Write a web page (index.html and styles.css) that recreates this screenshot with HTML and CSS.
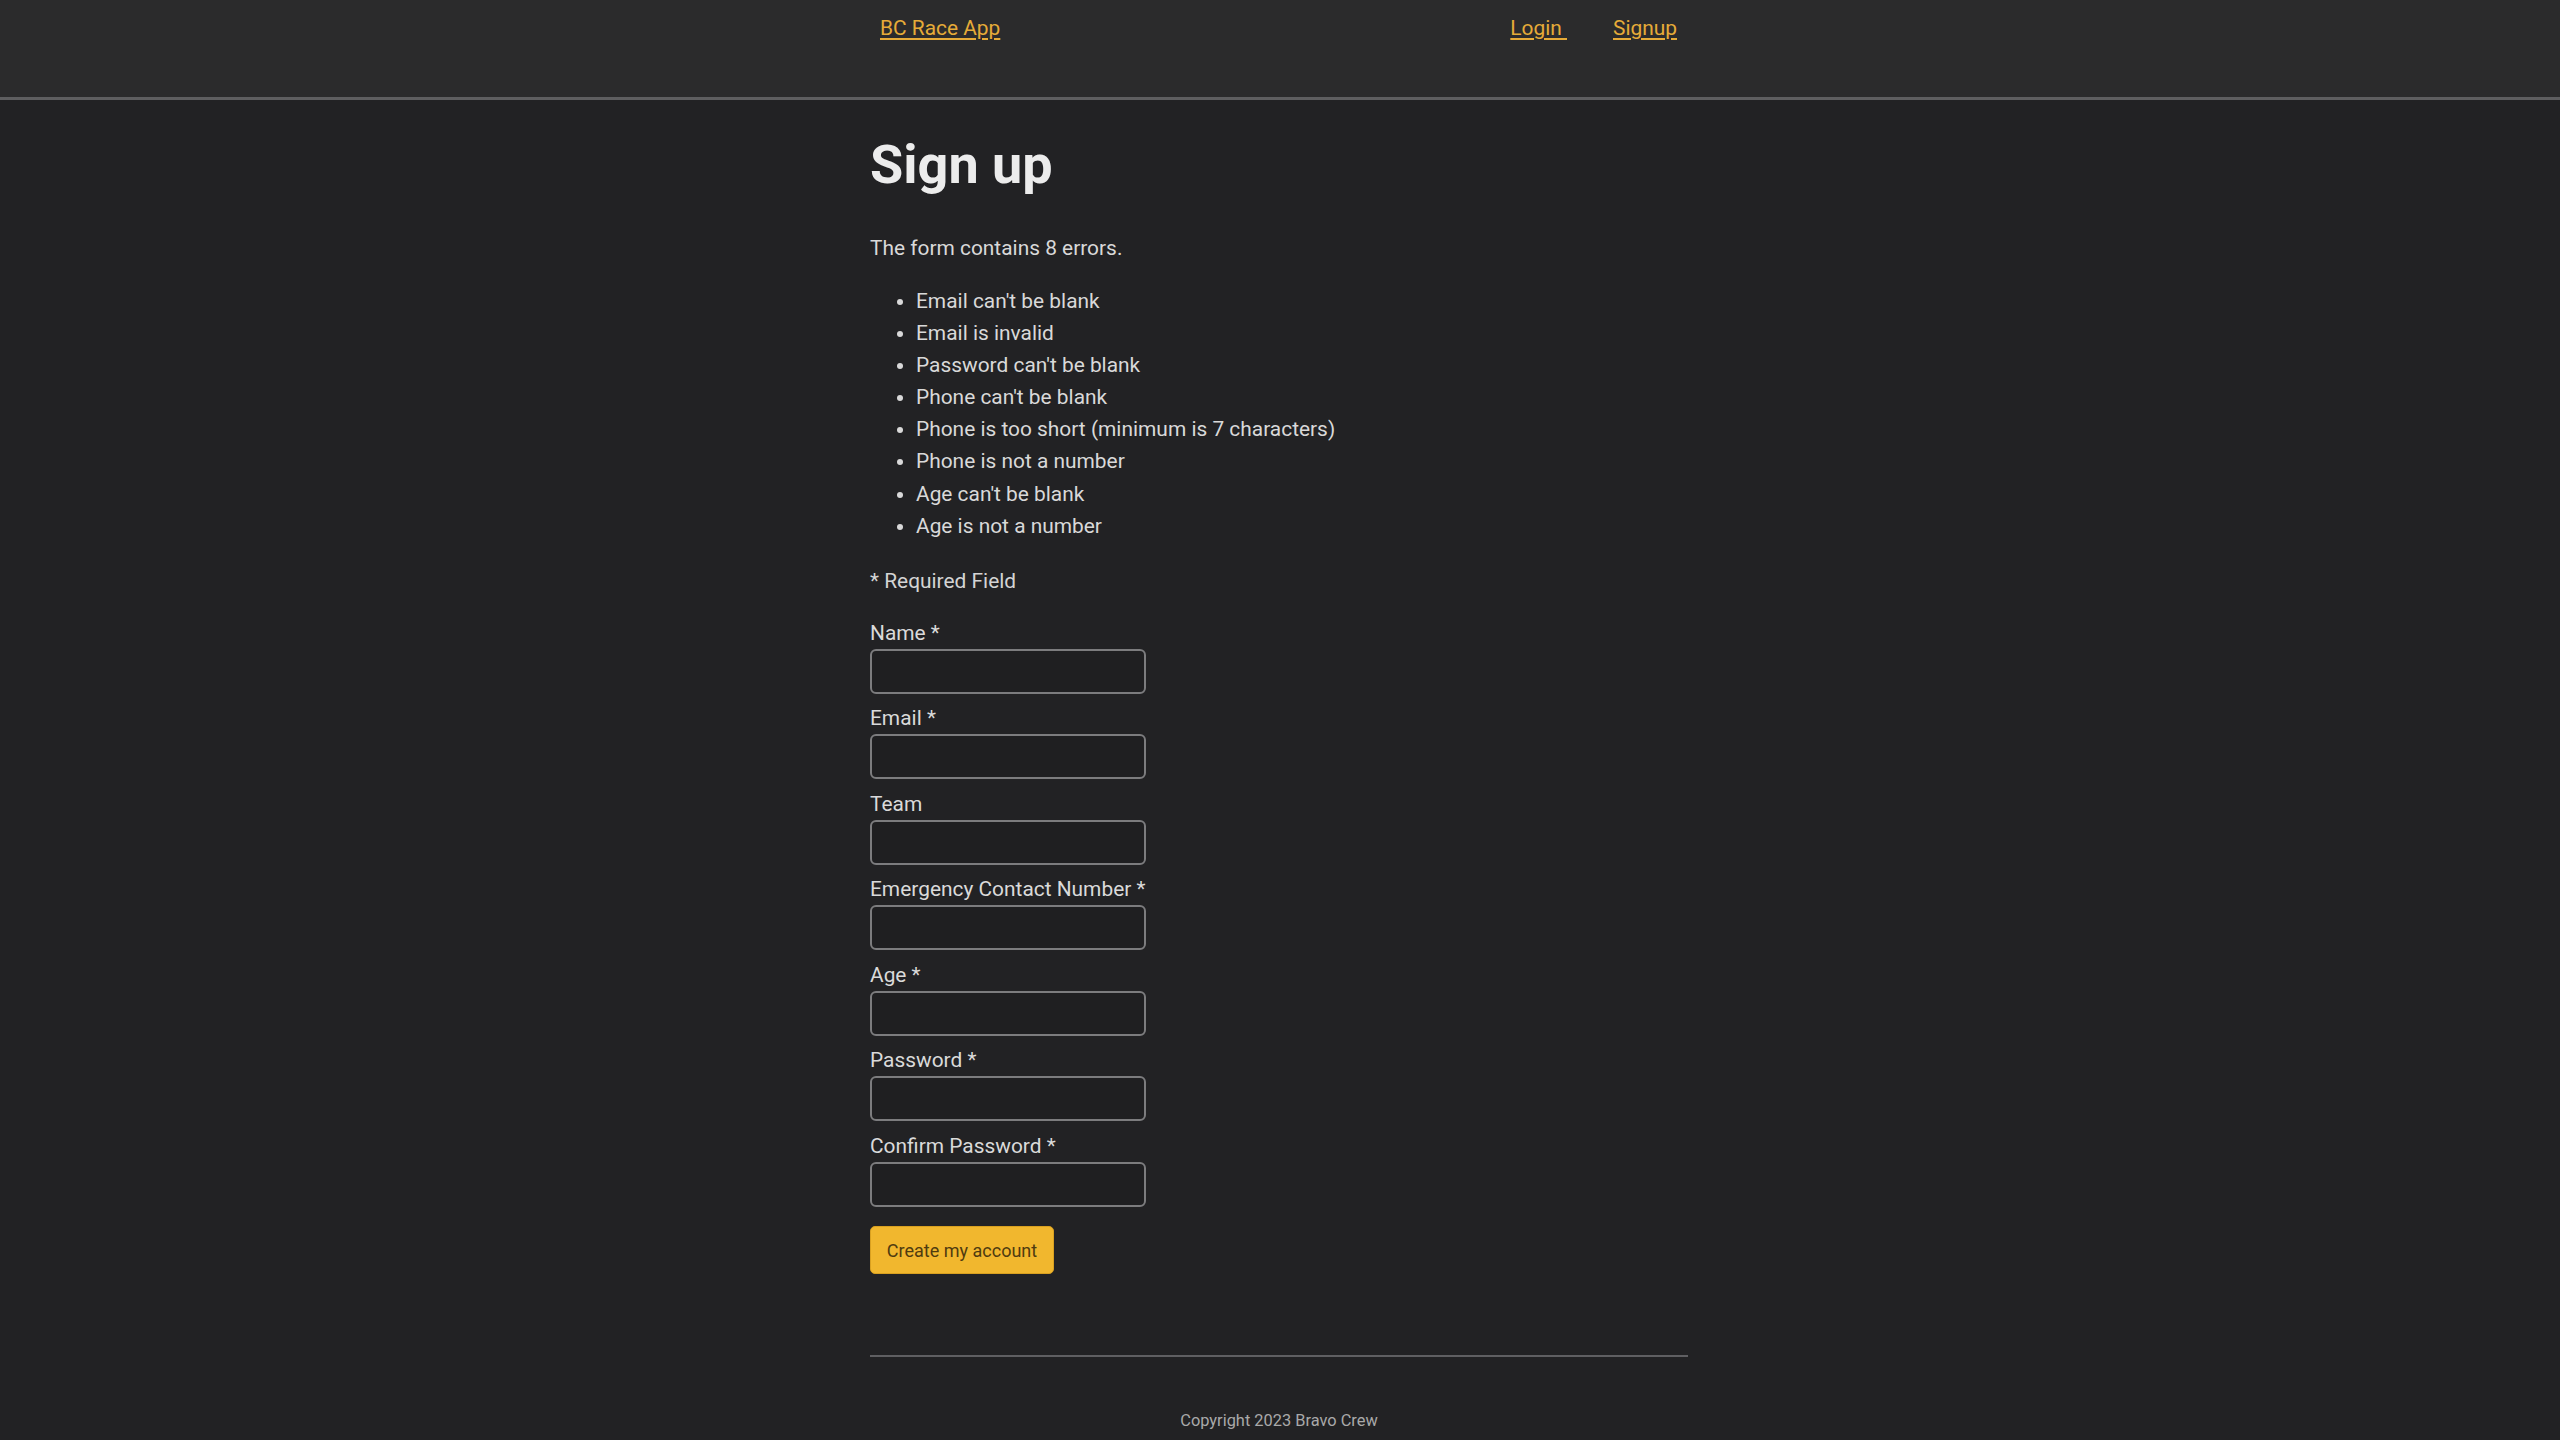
FILE: index.html
```html
<!DOCTYPE html>
<html lang="en">
<head>
<meta charset="utf-8">
<title>Sign up | BC Race App</title>
<link rel="stylesheet" href="styles.css">
</head>
<body>
<header class="site-header">
  <nav class="nav">
    <a class="brand" href="#">BC Race App</a>
    <div class="nav-links">
      <a href="#">Login&nbsp;</a>
      <a href="#">Signup</a>
    </div>
  </nav>
</header>
<main class="container">
  <h1 class="title">Sign up</h1>
  <div class="errors">
    <p class="errors-summary">The form contains 8 errors.</p>
    <ul class="errors-list">
      <li>Email can't be blank</li>
      <li>Email is invalid</li>
      <li>Password can't be blank</li>
      <li>Phone can't be blank</li>
      <li>Phone is too short (minimum is 7 characters)</li>
      <li>Phone is not a number</li>
      <li>Age can't be blank</li>
      <li>Age is not a number</li>
    </ul>
  </div>
  <p class="required-note">* Required Field</p>
  <form class="signup-form">
    <label class="field-label" for="name">Name *</label>
    <input class="field-input" id="name" type="text">
    <label class="field-label" for="email">Email *</label>
    <input class="field-input" id="email" type="email">
    <label class="field-label" for="team">Team</label>
    <input class="field-input" id="team" type="text">
    <label class="field-label" for="phone">Emergency Contact Number *</label>
    <input class="field-input" id="phone" type="text">
    <label class="field-label" for="age">Age *</label>
    <input class="field-input" id="age" type="text">
    <label class="field-label" for="password">Password *</label>
    <input class="field-input" id="password" type="password">
    <label class="field-label" for="confirm">Confirm Password *</label>
    <input class="field-input" id="confirm" type="password">
    <button class="submit-btn" type="button">Create my account</button>
  </form>
  <footer class="site-footer">
    <p class="copyright">Copyright 2023 Bravo Crew</p>
  </footer>
</main>
</body>
</html>
```
FILE: styles.css
```css
html, body {
  margin: 0;
  padding: 0;
}

body {
  background: #222224;
  color: #d9d9d9;
  font-family: Roboto, "Liberation Sans", Arial, sans-serif;
  font-size: 20.9px;
  line-height: 32px;
  min-height: 1440px;
}

a {
  color: #e6ab38;
  text-decoration: underline;
  text-underline-offset: 3px;
  text-decoration-thickness: 1.5px;
}

.site-header {
  background: #2b2b2c;
  height: 97px;
  border-bottom: 3px solid #5e5e60;
}

.nav {
  width: 818px;
  margin-left: calc(50% - 410px);
  box-sizing: border-box;
  padding: 12px 11px 0 10px;
  display: flex;
  justify-content: space-between;
  align-items: flex-start;
}

.nav-links {
  display: flex;
  gap: 46px;
}

.container {
  width: 818px;
  margin-left: calc(50% - 410px);
  padding-top: 32px;
}

.title {
  margin: 0;
  font-size: 54px;
  line-height: 65px;
  font-weight: 700;
  color: #ececec;
}

.errors-summary {
  margin: 35px 0 0;
}

.errors-list {
  margin: 21px 0 0;
  padding-left: 46px;
  line-height: 32.1px;
}

.required-note {
  margin: 23px 0 0;
  color: #d4d4d4;
}

.signup-form {
  display: flex;
  flex-direction: column;
  align-items: flex-start;
  margin-top: 21px;
}

.field-label {
  display: block;
  line-height: 31px;
  color: #dadada;
}

.field-input {
  display: block;
  box-sizing: border-box;
  width: 276px;
  height: 45px;
  margin: 0 0 9.5px;
  background: #1f1f21;
  border: 2px solid #7c7c7e;
  border-radius: 6px;
  color: #ddd;
  font: inherit;
  padding: 0 10px;
}

.submit-btn {
  margin-top: 10px;
  width: 184px;
  height: 48px;
  background: #f1b72e;
  border: 1px solid #d9a020;
  border-radius: 5px;
  color: #4f3b10;
  font-family: Roboto, "Liberation Sans", Arial, sans-serif;
  font-size: 18px;
  padding: 0;
}

.site-footer {
  margin-top: 81px;
  border-top: 2px solid #5f5f62;
  text-align: center;
}

.copyright {
  margin: 52px 0 0;
  font-size: 16.4px;
  line-height: 24px;
  color: #a9a9a9;
}
```
